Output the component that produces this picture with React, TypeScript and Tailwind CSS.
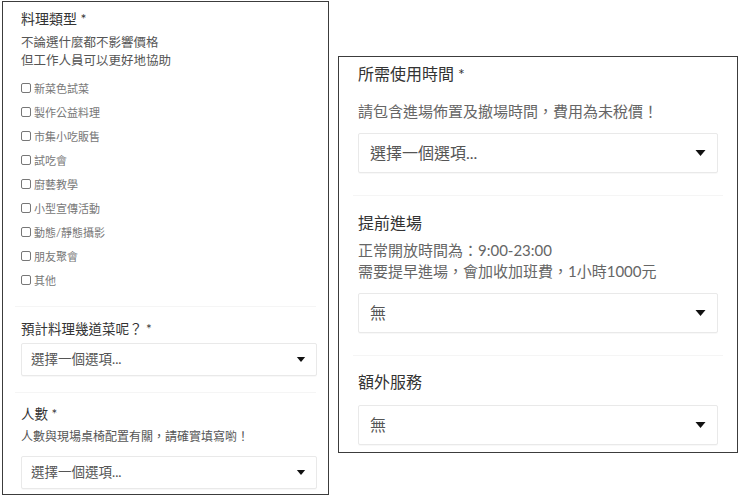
import React from "react";

const leftOptions = [
  "新菜色試菜",
  "製作公益料理",
  "市集小吃販售",
  "試吃會",
  "廚藝教學",
  "小型宣傳活動",
  "動態/靜態攝影",
  "朋友聚會",
  "其他",
];

function Caret({ className }: { className: string }) {
  return (
    <svg viewBox="0 0 10 6" className={className} aria-hidden>
      <path d="M0 0 L10 0 L5 6 Z" fill="#111" />
    </svg>
  );
}

function SmallSelect({ label }: { label: string }) {
  return (
    <div className="flex h-[33px] w-[296px] items-center justify-between rounded-[2px] border border-[#e9e9e9] bg-white pl-[9px] pr-[10px] shadow-[0_1px_1px_rgba(0,0,0,0.03)]">
      <span className="text-[13.5px] leading-none text-[#555]">{label}</span>
      <Caret className="h-[5px] w-[10px]" />
    </div>
  );
}

function BigSelect({ label }: { label: string }) {
  return (
    <div className="flex h-[40px] w-[360px] items-center justify-between rounded-[2px] border border-[#e9e9e9] bg-white pl-[11px] pr-[11px] shadow-[0_1px_1px_rgba(0,0,0,0.03)]">
      <span className="text-[16px] leading-none text-[#555]">{label}</span>
      <Caret className="h-[6px] w-[11px]" />
    </div>
  );
}

function Divider({ className }: { className: string }) {
  return <div className={className} />;
}

export default function App() {
  return (
    <div className="flex h-[499px] w-[740px] items-start bg-white font-['Lato','Noto_Sans_CJK_TC','Noto_Sans',sans-serif]">
      {/* left card */}
      <div className="ml-[2px] mt-[1px] flex h-[494px] w-[327px] flex-col border border-[#3c3c3c] bg-white">
        <div className="pb-[14px] pl-[18px] pt-[7px]">
          <p className="text-[14px] leading-[20px] text-[#333]">料理類型 *</p>
          <p className="mt-[5px] text-[12.5px] leading-[18px] text-[#555]">
            不論選什麼都不影響價格
            <br />
            但工作人員可以更好地協助
          </p>
          <ul className="mt-[6px] flex flex-col">
            {leftOptions.map((o) => (
              <li key={o} className="flex h-[24px] items-center gap-[3px]">
                <span className="h-[10px] w-[10px] rounded-[2px] border border-[#777]" />
                <span className="text-[11px] leading-none text-[#777]">{o}</span>
              </li>
            ))}
          </ul>
        </div>
        <Divider className="mx-[12px] h-px bg-[#f5f5f5]" />
        <div className="pb-[16px] pl-[18px] pt-[12px]">
          <p className="text-[13.5px] leading-[20px] text-[#333]">預計料理幾道菜呢？ *</p>
          <div className="mt-[4px]">
            <SmallSelect label="選擇一個選項..." />
          </div>
        </div>
        <Divider className="mx-[12px] h-px bg-[#f5f5f5]" />
        <div className="pl-[18px] pt-[11px]">
          <p className="text-[13.5px] leading-[20px] text-[#333]">人數 *</p>
          <p className="mt-[4px] text-[12px] leading-[18px] text-[#555]">
            人數與現場桌椅配置有關，請確實填寫喲！
          </p>
          <div className="mt-[10px]">
            <SmallSelect label="選擇一個選項..." />
          </div>
        </div>
      </div>

      {/* right card */}
      <div className="ml-[9px] mt-[56px] flex h-[397px] w-[400px] flex-col border border-[#3c3c3c] bg-white">
        <div className="pb-[22px] pl-[19px] pt-[5px]">
          <p className="text-[16px] leading-[24px] text-[#333]">所需使用時間 *</p>
          <p className="mt-[14px] text-[15px] leading-[22px] text-[#666]">
            請包含進場佈置及撤場時間，費用為未稅價！
          </p>
          <div className="mt-[11px]">
            <BigSelect label="選擇一個選項..." />
          </div>
        </div>
        <Divider className="mx-[14px] h-px bg-[#f5f5f5]" />
        <div className="pb-[22px] pl-[19px] pt-[15px]">
          <p className="text-[16px] leading-[24px] text-[#333]">提前進場</p>
          <p className="mt-[5px] text-[15px] leading-[21px] text-[#666]">
            正常開放時間為：9:00-23:00
            <br />
            需要提早進場，會加收加班費，1小時1000元
          </p>
          <div className="mt-[11px]">
            <BigSelect label="無" />
          </div>
        </div>
        <Divider className="mx-[14px] h-px bg-[#f5f5f5]" />
        <div className="pl-[19px] pt-[14px]">
          <p className="text-[16px] leading-[24px] text-[#333]">額外服務</p>
          <div className="mt-[11px]">
            <BigSelect label="無" />
          </div>
        </div>
      </div>
    </div>
  );
}
